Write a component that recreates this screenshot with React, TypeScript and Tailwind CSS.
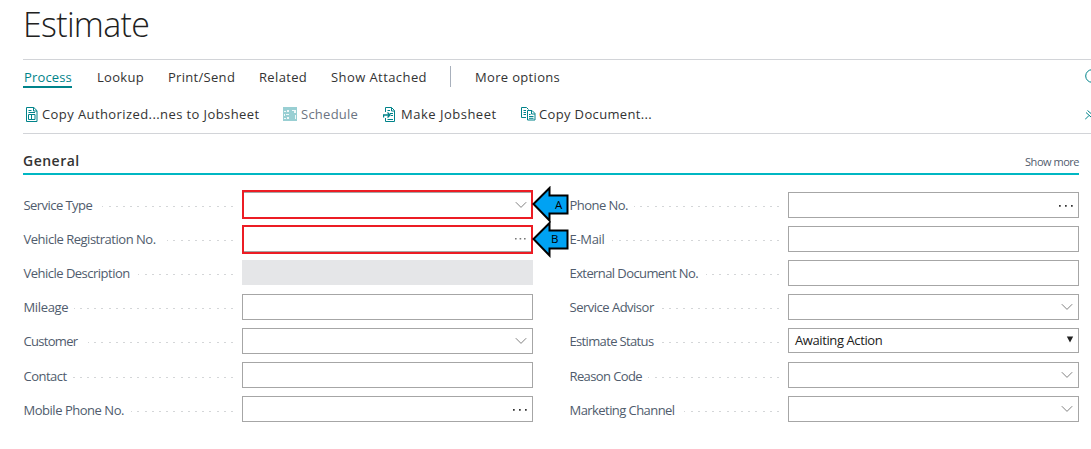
import React from "react";

type Adornment = "chevron" | "dots" | "smallDots" | "caret" | "none";

interface Field {
  label: string;
  tracking: string;
  leader: string;
  adornment: Adornment;
  disabled?: boolean;
  shift?: string;
  value?: string;
  marker?: "A" | "B";
}

const leftFields: Field[] = [
  { label: "Service Type", tracking: "tracking-[-0.56px]", leader: "w-[131px]", adornment: "chevron", marker: "A" },
  { label: "Vehicle Registration No.", tracking: "tracking-[-0.48px]", leader: "w-[66px]", adornment: "smallDots", marker: "B" },
  { label: "Vehicle Description", tracking: "tracking-[-0.51px]", leader: "w-[95px]", adornment: "none", disabled: true },
  { label: "Mileage", tracking: "tracking-[-0.35px]", leader: "w-[159px]", adornment: "none" },
  { label: "Customer", tracking: "tracking-[-0.7px]", leader: "w-[145px]", adornment: "chevron" },
  { label: "Contact", tracking: "tracking-[-0.5px]", leader: "w-[160px]", adornment: "none", shift: "pt-[2px]" },
  { label: "Mobile Phone No.", tracking: "tracking-[-0.47px]", leader: "w-[102px]", adornment: "dots", shift: "pt-[2px]" },
];

const rightFields: Field[] = [
  { label: "Phone No.", tracking: "tracking-[-0.55px]", leader: "w-[145px]", adornment: "dots" },
  { label: "E-Mail", tracking: "tracking-[-0.3px]", leader: "w-[167px]", adornment: "none" },
  { label: "External Document No.", tracking: "tracking-[-0.59px]", leader: "w-[73px]", adornment: "none" },
  { label: "Service Advisor", tracking: "tracking-[-0.5px]", leader: "w-[117px]", adornment: "chevron" },
  { label: "Estimate Status", tracking: "tracking-[-0.65px]", leader: "w-[117px]", adornment: "caret", value: "Awaiting Action" },
  { label: "Reason Code", tracking: "tracking-[-0.6px]", leader: "w-[131px]", adornment: "chevron", shift: "pt-[2px]" },
  { label: "Marketing Channel", tracking: "tracking-[-0.56px]", leader: "w-[95px]", adornment: "chevron", shift: "pt-[2px]" },
];

function Chevron() {
  return (
    <svg className="mr-[5px] shrink-0" width="12" height="8" viewBox="0 0 12 8" fill="none" stroke="#808080">
      <path d="M.8 1.2 6 6.4l5.2-5.2" />
    </svg>
  );
}

function Ellipsis({ small }: { small: boolean }) {
  return small ? (
    <svg className="mr-[6px] shrink-0" width="11" height="2" viewBox="0 0 11 2" fill="#777">
      <path d="M0 0h1.600v1.600H0zM4.600 0h1.600v1.600H4.600zM9 0h1.600v1.600H9z" />
    </svg>
  ) : (
    <svg className="mt-px mr-[5px] shrink-0" width="14" height="2" viewBox="0 0 14 2" fill="#333">
      <path d="M0 0h1.700v1.700H0zM6 0h1.700v1.700H6zM12 0h1.700v1.700H12z" />
    </svg>
  );
}

function Marker({ letter }: { letter: "A" | "B" }) {
  return (
    <>
      <span className={`absolute -left-px h-[29px] w-[291px] border-2 border-[#ec1c24] ${letter === "A" ? "-top-[3px]" : "-top-[2px]"}`} />
      <div className={`absolute left-[289px] h-[37px] w-[37px] ${letter === "A" ? "-top-[7px]" : "-top-[6px]"}`}>
        <svg width="37" height="37" viewBox="0 0 37 37">
          <path d="M1.500 18 17.500 2v7.500H35.500V27.500H17.500v7z" fill="#00a2f3" stroke="#000" strokeWidth="2" />
        </svg>
        <span className={`absolute text-[11.500px] leading-4 text-black ${letter === "A" ? "top-[11px] left-[23px]" : "top-[10px] left-[19px]"}`}>{letter}</span>
      </div>
    </>
  );
}

function FieldRow({ field }: { field: Field }) {
  return (
    <div className="flex h-[26px]">
      <div className={`flex w-[210px] shrink-0 items-center pl-[0.5px] ${field.shift ?? ""}`}>
        <span className={`shrink-0 text-[13px] leading-5 whitespace-nowrap text-[#505c6d] ${field.tracking}`}>{field.label}</span>
        <span className={`mt-[2px] ml-auto h-px shrink-0 bg-[repeating-linear-gradient(to_left,#d4d6d8_0_2px,transparent_2px_7.2px)] ${field.leader}`} />
      </div>
      <div
        className={`relative ml-[9px] flex w-[291px] shrink-0 items-center ${
          field.disabled ? "h-[25px] bg-[#e5e6e8]" : field.value ? "h-[25px] border border-[#a6a6a6]" : "border border-[#a6a6a6]"
        }`}
      >
        {field.value && <span className="pt-px pl-[6px] text-[13px] tracking-[-0.4px] text-[#212121]">{field.value}</span>}
        <div className="ml-auto flex items-center">
          {field.adornment === "chevron" && <Chevron />}
          {field.adornment === "dots" && <Ellipsis small={false} />}
          {field.adornment === "smallDots" && <Ellipsis small />}
          {field.adornment === "caret" && (
            <svg className="mr-[4px] mb-[2px]" width="8" height="7" viewBox="0 0 8 7">
              <path d="M.8.5h6.400L4 6.500z" fill="#222" />
            </svg>
          )}
        </div>
        {field.marker && <Marker letter={field.marker} />}
      </div>
    </div>
  );
}

function SheetIcon() {
  return (
    <svg width="12" height="15" viewBox="0 0 12 15" fill="none" stroke="#00838a">
      <path d="M.5.5h7.300l3.200 3.200v10.800H.5zM7.500.5v3.500H11M2.500 3.500h3M2.500 5.500h6.500M2.500 7.500h6.500v5h-6.500zM5.500 7.500v5" />
    </svg>
  );
}

function ScheduleIcon() {
  return (
    <svg width="14" height="14" viewBox="0 0 14 14">
      <path d="M0 0h14v14H0z" fill="#99cfd3" />
      <path d="M1 4h2v1H1zM4 3h2v2H4zM1 7h1v2H1zM3 7h3v1H3zM1 11h2v1H1zM4 10h2v2H4zM9 3h4v1H9zM11 4h2v2h-2zM12 8h1v4h-1z" fill="#fff" opacity=".85" />
    </svg>
  );
}

function MakeIcon() {
  return (
    <svg width="13" height="15" viewBox="0 0 13 15" fill="none" stroke="#00838a">
      <path d="M2.500 5V.5H8.500l3 3v11H2.500V11M8.500.5V4H11.500M4.500 3.500H7M7 6.500h3M8 8.500h2M4.500 12.500H10" />
      <path d="M.5 10.500V8H6M4.500 5.500 7 8l-2.500 2.500" strokeWidth="1.400" />
    </svg>
  );
}

function CopyIcon() {
  return (
    <svg width="15" height="14" viewBox="0 0 15 14" fill="none" stroke="#00838a">
      <path d="M5 10.500H.5V.5h5l2 2M2.500 3.500H5M2.500 5.500H5M2.500 7.500H5" />
      <path d="M6.500 3.500H11l3 3v6.500H6.500zM10.500 3.500V7H14M8 7.500h1.500M8 9.500h4.500M8 11.300h4.500" />
    </svg>
  );
}

export default function App() {
  return (
    <div className="h-[449px] w-[1091px] overflow-hidden bg-white pl-[23px] font-['Open_Sans','Noto_Sans',sans-serif] text-[#333]">
      <header className="h-[59px]">
        <h1 className="text-[34px] leading-[48px] font-light tracking-[-0.7px] text-[#212121]">Estimate</h1>
      </header>

      <nav className="flex h-[36px] items-start border-t border-[#d2d4d8] pt-[6px] text-[13px] leading-[22px] whitespace-nowrap">
        <div className="h-[22px] w-[49px] border-b-2 border-[#00838a] pl-px tracking-[0.15px] text-[#00838a]">Process</div>
        <div className="ml-[25px] w-[71px] tracking-[0.3px]">Lookup</div>
        <div className="w-[91px] tracking-[0.3px]">Print/Send</div>
        <div className="w-[72px] tracking-[0.35px]">Related</div>
        <div className="w-[119px] tracking-[0.42px]">Show Attached</div>
        <div className="h-[21px] w-[25px] border-l border-[#a8b0bc]" />
        <div className="tracking-[0.33px]">More options</div>
        <svg className="mt-[3px] ml-auto" width="6" height="14" viewBox="0 0 6 14" fill="none" stroke="#00838a">
          <circle cx="7" cy="7" r="6.300" />
        </svg>
      </nav>

      <div className="flex h-[39px] items-center border-b border-[#d2d4d8] pl-[3px] text-[13px] whitespace-nowrap">
        <div className="flex w-[257px] items-center gap-[4px] tracking-[0.41px]"><SheetIcon /><span className="pt-px">Copy Authorized...nes to Jobsheet</span></div>
        <div className="flex w-[100px] items-center gap-[4px] tracking-[0.25px] text-[#6b7482]"><ScheduleIcon /><span className="pt-px">Schedule</span></div>
        <div className="flex w-[138px] items-center gap-[5px] tracking-[0.5px]"><MakeIcon /><span className="pt-px">Make Jobsheet</span></div>
        <div className="flex items-center gap-[3px] tracking-[0.35px]"><CopyIcon /><span className="pt-px">Copy Document...</span></div>
        <svg className="mt-px ml-auto" width="6" height="10" viewBox="0 0 6 10" fill="none" stroke="#00838a">
          <path d="M0 9.500 4 5.500M1 2.500 6 7M2.500.5 6 3.500" />
        </svg>
      </div>

      <section className="w-[1056px]">
        <div className="flex h-[41px] items-center justify-between border-b-2 border-[#00b7c3] pt-[14px]">
          <h2 className="text-[14px] leading-5 font-semibold tracking-[0.5px] text-[#333]">General</h2>
          <span className="pt-[2px] text-[11px] leading-4 tracking-[-0.48px] text-[#505c6d]">Show more</span>
        </div>
        <div className="flex gap-[36px] pt-[17px]">
          <div className="flex w-[510px] flex-col gap-2">
            {leftFields.map((field) => <FieldRow key={field.label} field={field} />)}
          </div>
          <div className="flex w-[510px] flex-col gap-2">
            {rightFields.map((field) => <FieldRow key={field.label} field={field} />)}
          </div>
        </div>
      </section>
    </div>
  );
}
